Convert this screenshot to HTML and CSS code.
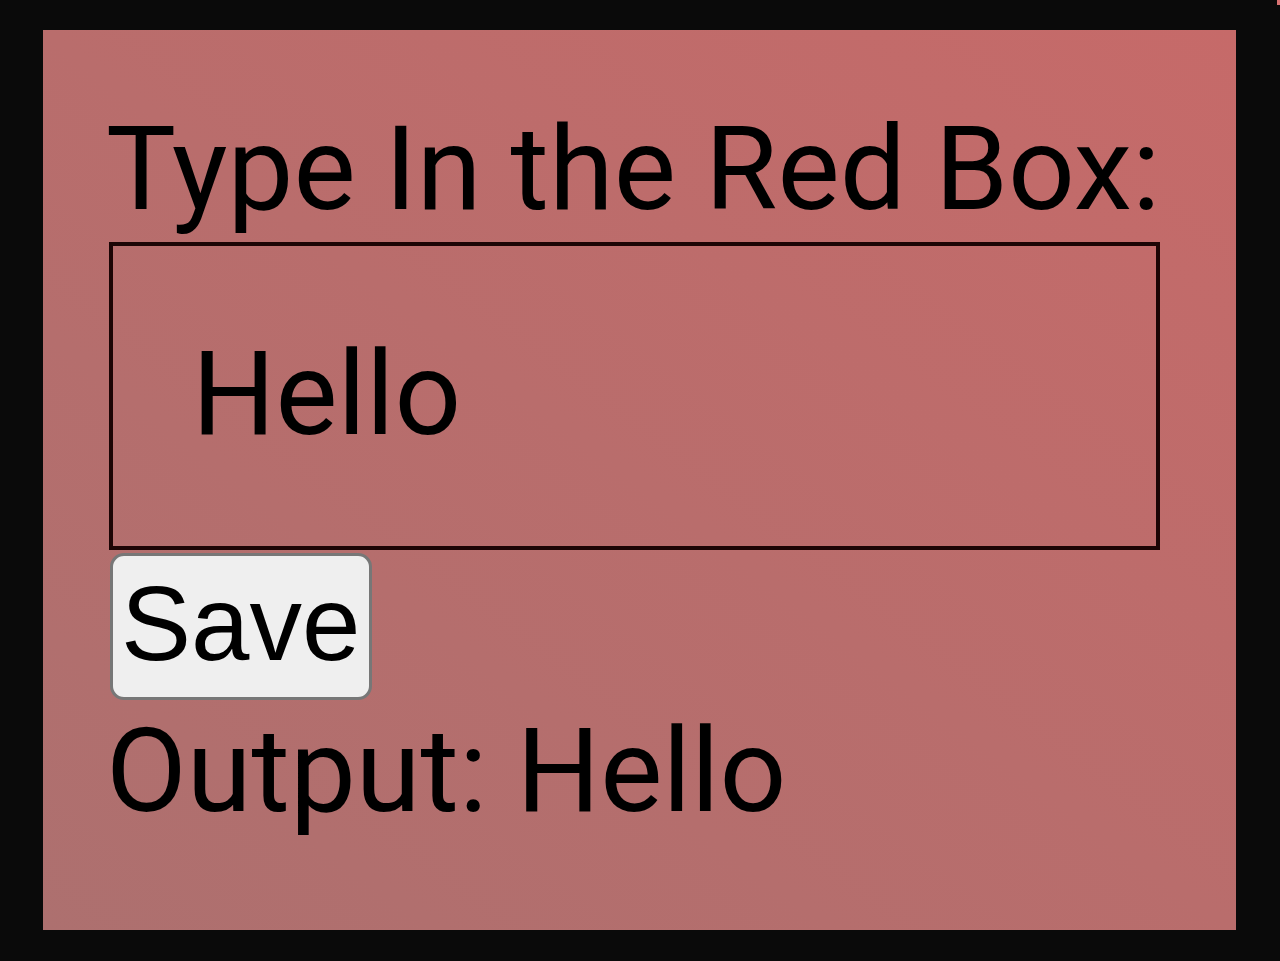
FILE: index.html
```html
<!DOCTYPE html>
<html lang="en">
<head>
<meta charset="utf-8">
<title>Type In the Red Box</title>
<link rel="stylesheet" href="styles.css">
</head>
<body>
<div class="corner-mark"></div>
<main class="red-box">
  <label class="title" for="entry">Type In the Red Box:</label>
  <input class="entry" id="entry" type="text" value="Hello">
  <button class="save" type="button">Save</button>
  <p class="output">Output: Hello</p>
</main>
</body>
</html>
```
FILE: styles.css
```css
html, body {
  margin: 0;
  padding: 0;
}

body {
  background: #0a0a0a;
  width: 1280px;
  height: 961px;
  overflow: hidden;
  position: relative;
  padding-top: 30px;
  box-sizing: border-box;
}

.corner-mark {
  position: absolute;
  top: 0;
  right: 0;
  width: 3px;
  height: 5px;
  background: #d87272;
}

.red-box {
  margin-left: 43px;
  width: 1193px;
  height: 900px;
  box-sizing: border-box;
  padding: 70px 0 0 66px;
  background: linear-gradient(to top right, #ad706f 0%, #b96d6c 50%, #c66a69 100%);
  display: flex;
  flex-direction: column;
  align-items: flex-start;
}

.title {
  display: block;
  font-family: Roboto, "Liberation Sans", sans-serif;
  font-size: 117.4px;
  line-height: 138px;
  color: #000;
  margin: 0 0 4px -3px;
  white-space: nowrap;
}

.entry {
  display: block;
  width: 1051px;
  height: 308px;
  box-sizing: border-box;
  border: 4px solid #1c0505;
  background: transparent;
  font-family: Roboto, "Liberation Sans", sans-serif;
  font-size: 117px;
  color: #000;
  padding: 0 0 5px 79px;
  margin: 0 0 3px;
  outline: none;
}

.save {
  display: block;
  font-family: "Liberation Sans", Arial, sans-serif;
  font-size: 105px;
  line-height: 115px;
  padding: 10px 9px 16px 8px;
  border: 3px solid #777;
  border-radius: 14px;
  background: #efefef;
  color: #000;
  margin: 0 0 2px 1px;
}

.output {
  font-family: Roboto, "Liberation Sans", sans-serif;
  font-size: 117.4px;
  line-height: 138px;
  color: #000;
  margin: 0 0 0 -3px;
  white-space: nowrap;
}
```
